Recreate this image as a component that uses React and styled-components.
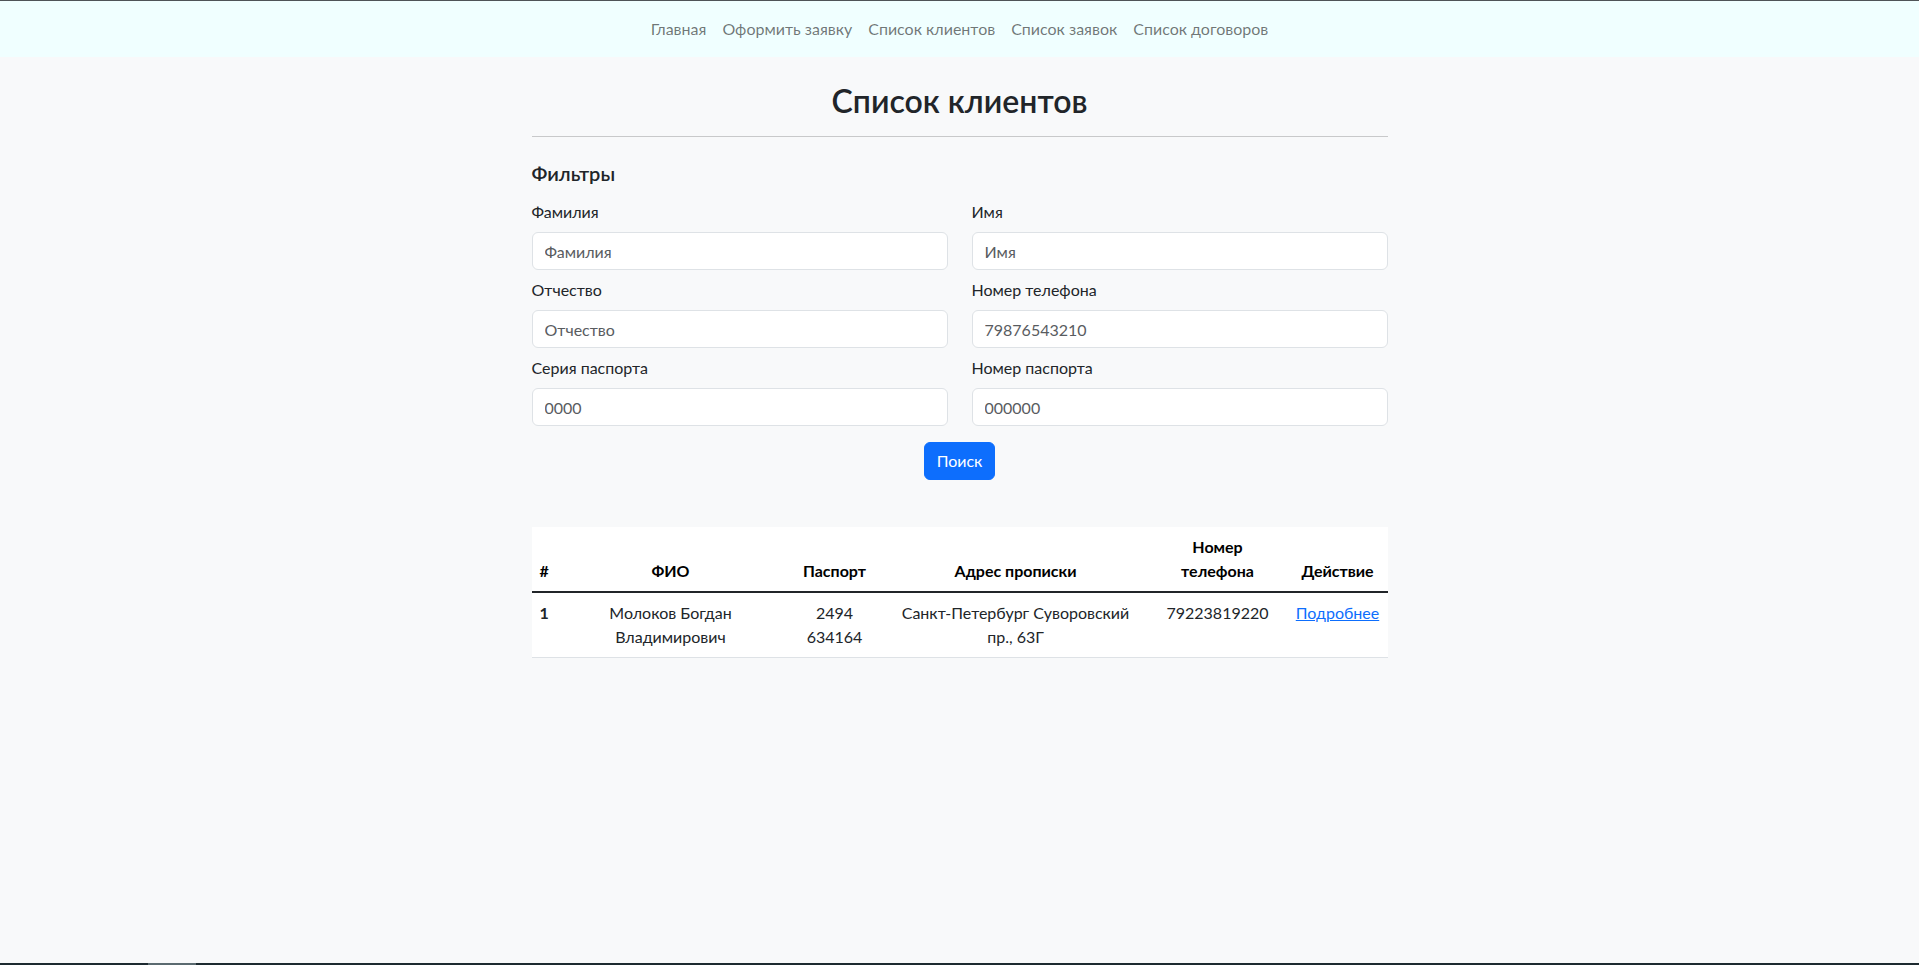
import styled, { createGlobalStyle } from "styled-components"

const GlobalStyle = createGlobalStyle`
body {
  margin: 0;
  background: #f8f9fa;
  color: #212529;
  font-family: Lato, "Open Sans", sans-serif;
  font-size: 16px;
  line-height: 1.5;
}
* {
  box-sizing: border-box;
}
`

const Navbar = styled.nav`
display: flex;
justify-content: center;
padding: 8px 0;
background: #f0ffff;
border-top: 1px solid #4f5457;
`
const NavLink = styled.a`
padding: 8px;
color: rgba(0, 0, 0, 0.55);
text-decoration: none;
line-height: 24px;
cursor: pointer;
`

const Main = styled.main`
width: 856px;
margin: 0 auto;
padding-top: 25px;
`
const Title = styled.h2`
margin: 0 0 16px;
text-align: center;
font-size: 32px;
line-height: 38px;
font-weight: 600;
`
const Divider = styled.hr`
margin: 0;
border: 0;
border-top: 1px solid #c8c9ca;
`
const FiltersTitle = styled.h5`
margin: 24px 0 15px;
font-size: 20px;
line-height: 24px;
font-weight: 600;
`
const FilterGrid = styled.div`
display: grid;
grid-template-columns: 1fr 1fr;
column-gap: 24px;
row-gap: 8px;
`
const Field = styled.div`
display: flex;
flex-direction: column;
`
const Label = styled.label`
margin-bottom: 8px;
line-height: 24px;
`
const Input = styled.input`
height: 38px;
padding: 6px 12px;
border: 1px solid #dee2e6;
border-radius: 6px;
background: #fff;
color: #212529;
font: inherit;
outline: none;
&::placeholder {
  color: #595c5f;
}
`
const Actions = styled.div`
display: flex;
justify-content: center;
margin-top: 16px;
`
const Button = styled.button`
padding: 6px 12px;
border: 1px solid #0d6efd;
border-radius: 6px;
background: #0d6efd;
color: #fff;
font: inherit;
line-height: 24px;
cursor: pointer;
`

const Table = styled.table`
width: 100%;
margin-top: 47px;
border-collapse: collapse;
table-layout: fixed;
background: #fff;
`
const Th = styled.th`
padding: 8px;
vertical-align: bottom;
text-align: ${props => props.align || "center"};
font-weight: 700;
color: #000;
line-height: 24px;
border-bottom: 2px solid #212529;
`
const Td = styled.td`
padding: 8px;
vertical-align: top;
text-align: ${props => props.align || "center"};
font-weight: ${props => props.bold ? 700 : 400};
line-height: 24px;
white-space: nowrap;
border-bottom: 1px solid #dee2e6;
`
const MoreLink = styled.a`
color: #0d6efd;
text-decoration: underline;
cursor: pointer;
`

const TaskBar = styled.div`
position: fixed;
left: 0;
right: 0;
bottom: 0;
height: 2px;
display: flex;
background: #1d2a30;
`
const TaskItem = styled.div`
width: 48px;
margin-left: 148px;
background: #5b6a70;
`

const navItems = ["Главная", "Оформить заявку", "Список клиентов", "Список заявок", "Список договоров"]

const fields = [
  { label: "Фамилия", placeholder: "Фамилия" },
  { label: "Имя", placeholder: "Имя" },
  { label: "Отчество", placeholder: "Отчество" },
  { label: "Номер телефона", placeholder: "79876543210" },
  { label: "Серия паспорта", placeholder: "0000" },
  { label: "Номер паспорта", placeholder: "000000" },
]

const App = () => {
  return (
    <>
      <GlobalStyle />
      <Navbar>
        {navItems.map(item => (
          <NavLink key={item}>{item}</NavLink>
        ))}
      </Navbar>

      <Main>
        <Title>Список клиентов</Title>
        <Divider />
        <FiltersTitle>Фильтры</FiltersTitle>

        <FilterGrid>
          {fields.map(f => (
            <Field key={f.label}>
              <Label>{f.label}</Label>
              <Input placeholder={f.placeholder} />
            </Field>
          ))}
        </FilterGrid>

        <Actions>
          <Button>Поиск</Button>
        </Actions>

        <Table>
          <colgroup>
            <col style={{ width: 24 }} />
            <col style={{ width: 230 }} />
            <col style={{ width: 98 }} />
            <col style={{ width: 264 }} />
            <col style={{ width: 140 }} />
            <col style={{ width: 100 }} />
          </colgroup>
          <thead>
            <tr>
              <Th align="left">#</Th>
              <Th>ФИО</Th>
              <Th>Паспорт</Th>
              <Th>Адрес прописки</Th>
              <Th>Номер<br />телефона</Th>
              <Th>Действие</Th>
            </tr>
          </thead>
          <tbody>
            <tr>
              <Td align="left" bold>1</Td>
              <Td>Молоков Богдан<br />Владимирович</Td>
              <Td>2494<br />634164</Td>
              <Td>Санкт-Петербург Суворовский<br />пр., 63Г</Td>
              <Td>79223819220</Td>
              <Td><MoreLink>Подробнее</MoreLink></Td>
            </tr>
          </tbody>
        </Table>
      </Main>

      <TaskBar>
        <TaskItem />
      </TaskBar>
    </>
  )
}

export default App
